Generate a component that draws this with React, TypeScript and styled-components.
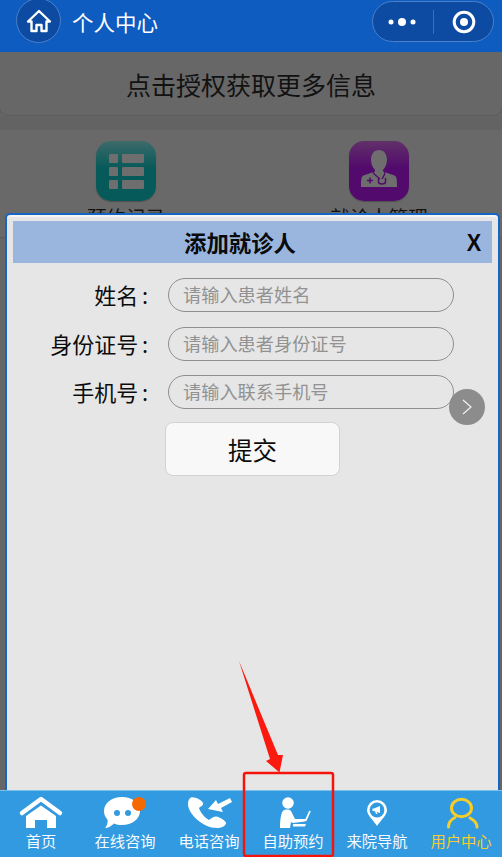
import React from "react";
import styled, { createGlobalStyle } from "styled-components";

const Global = createGlobalStyle`
  html, body { margin: 0; padding: 0; background: #666; }
  * { box-sizing: border-box; }
  body { font-family: "Noto Sans CJK SC", "Liberation Sans", sans-serif; }
`;

const Screen = styled.div`
  position: relative;
  width: 502px;
  height: 857px;
  overflow: hidden;
  display: flex;
  flex-direction: column;
`;

const NavBar = styled.header`
  height: 52px;
  flex: none;
  background: #0e5cc0;
  display: flex;
  align-items: flex-start;
  padding: 0 8px 0 16px;
`;

const HomeButton = styled.div`
  width: 45px;
  height: 45px;
  margin-top: -2px;
  border-radius: 50%;
  background: #0d4ba3;
  border: 1px solid #4a80c8;
  display: flex;
  align-items: center;
  justify-content: center;
`;

const NavTitle = styled.div`
  margin-left: 11px;
  flex: 1;
  font-size: 21.5px;
  line-height: 43px;
  color: #fff;
`;

const Capsule = styled.div`
  width: 122px;
  height: 41px;
  margin-top: 1px;
  border-radius: 21px;
  background: #0d4ba3;
  border: 1px solid #4a80c8;
  display: flex;
  align-items: center;
`;

const CapsuleCell = styled.div<{ $nudge?: number }>`
  flex: 1;
  height: 100%;
  padding-left: ${(p) => p.$nudge ?? 0}px;
  display: flex;
  align-items: center;
  justify-content: center;
`;

const CapsuleDivider = styled.div`
  width: 1px;
  height: 24px;
  margin-left: 2px;
  background: #3a70b8;
`;

const Main = styled.main`
  position: relative;
  flex: 1;
  min-height: 0;
  overflow: hidden;
  background: #666;
`;

const AuthCard = styled.div`
  height: 64px;
  background: #676767;
  border: 1px solid #5c5c5c;
  border-top: 0;
  border-radius: 0 0 9px 9px;
  margin: 0 -1px;
  display: flex;
  align-items: center;
  justify-content: center;
  font-size: 25px;
  color: #121212;
`;

const Gap = styled.div`
  height: 14px;
  background: #636363;
`;

const Shortcuts = styled.section`
  height: 108px;
  background: #696969;
  border-bottom: 1px solid #5c5c5c;
  display: grid;
  grid-template-columns: 252px 254px;
  padding-top: 11px;
`;

const Shortcut = styled.div`
  display: flex;
  flex-direction: column;
  align-items: center;
  font-size: 19.5px;
  line-height: 28px;
  color: #111;
`;

const ShortcutIcon = styled.div<{ $top: string; $bottom: string }>`
  width: 60px;
  height: 60px;
  margin-bottom: 2px;
  border-radius: 15px;
  background: linear-gradient(180deg, ${(p) => p.$top}, ${(p) => p.$bottom} 45%);
  box-shadow: 0 1px 1px rgba(0, 0, 0, 0.25);
  display: flex;
  align-items: center;
  justify-content: center;
`;

const Modal = styled.div`
  position: absolute;
  top: 161px;
  left: 5px;
  width: 495px;
  bottom: -10px;
  background: #e6e6e6;
  border: 2px solid #1566c4;
  border-radius: 5px;
  padding: 6px 6px 0 6px;
  box-shadow: inset 0 2px 0 #f5f5f5;
`;

const ModalHead = styled.div`
  position: relative;
  height: 42px;
  background: #9ab6df;
  display: flex;
  align-items: center;
  justify-content: center;
  padding-right: 25px;
  font-size: 22.4px;
  font-weight: 700;
  color: #0a0a0a;
`;

const CloseMark = styled.span`
  position: absolute;
  right: 10px;
  top: 8px;
  font-family: "Liberation Sans", sans-serif;
  font-size: 24px;
  line-height: 28px;
  font-weight: 700;
  transform: scaleX(0.9);
`;

const Form = styled.form`
  display: flex;
  flex-direction: column;
  gap: 14.5px;
  padding-top: 15px;
`;

const Row = styled.div`
  display: flex;
  align-items: center;
  height: 34px;
`;

const Label = styled.label`
  width: 135px;
  text-align: right;
  font-size: 22px;
  line-height: 32px;
  margin-bottom: 2px;
  color: #0c0c0c;
  white-space: nowrap;
`;

const Colon = styled.span`
  display: inline-block;
  padding-left: 3.5px;
`;

const Field = styled.input`
  margin-left: 20px;
  width: 286px;
  height: 34px;
  padding: 0 14px 2px;
  border: 1.5px solid #8e8e8e;
  border-radius: 17px;
  background: transparent;
  outline: none;
  font-family: inherit;
  font-size: 18.2px;
  color: #333;
  &::placeholder { color: #929292; opacity: 1; }
`;

const Submit = styled.button`
  align-self: flex-start;
  margin: -1.5px 0 0 152px;
  width: 175px;
  height: 54px;
  border: 1px solid #d2d2d2;
  border-radius: 8px;
  background: #f8f8f8;
  font-family: inherit;
  font-size: 24.5px;
  color: #0c0c0c;
  padding: 0;
`;

const Floater = styled.div`
  position: absolute;
  left: 449px;
  top: 337px;
  width: 36px;
  height: 36px;
  border-radius: 50%;
  background: #8c8c8c;
  display: flex;
  align-items: center;
  justify-content: center;
`;

const TabBar = styled.nav`
  height: 67px;
  flex: none;
  background: #329ae0;
  border-top: 1px solid #7cc0ee;
  display: flex;
  justify-content: center;
`;

const Tab = styled.div<{ $active?: boolean }>`
  width: 84px;
  flex: none;
  display: flex;
  flex-direction: column;
  align-items: center;
  padding-top: 5px;
  font-size: 15.3px;
  line-height: 20px;
  white-space: nowrap;
  color: ${(p) => (p.$active ? "#f6cd2a" : "#f6fafe")};
  svg { display: block; margin-bottom: 1px; }
`;

const Annotation = styled.svg`
  position: absolute;
  left: 0;
  top: 0;
  pointer-events: none;
`;

const BLUE = "#329ae0";

const icons = {
  home: (
    <>
      <path d="M5 17 24 3 43 17" fill="none" stroke="#fff" strokeWidth="4.5" strokeLinecap="round" strokeLinejoin="round" />
      <path d="M24 9.500 39 20V32H30V24H18V32H9V20Z" fill="#fff" />
    </>
  ),
  chat: (
    <>
      <path d="M21 1C31 1 39 7 39 15S31 29 21 29C18 29 15.500 28.500 13 27.500 10.500 30 7 32 4 32 6 30 7 27 6.500 23.500 4 21 3 18 3 15 3 7 11 1 21 1Z" fill="#fff" />
      <circle cx="16" cy="17" r="3" fill={BLUE} />
      <circle cx="27" cy="17" r="3" fill={BLUE} />
      <circle cx="38" cy="8" r="7" fill="#f56a00" />
    </>
  ),
  phone: (
    <>
      <path d="M6 1.500C9 .5 17 4 18 7 19 9 15 11 14 12 15 16 20 22 24 24 26 23 28 20 31 20.500 35 21 41 25 41 27 41 30 36 32 32 32 18 32 3 18 3 8 3 5 4 2.500 6 1.500Z" fill="#fff" />
      <path d="M23 13 31 4 33 8 45 2 47 6 36 12 38 16Z" fill="#fff" />
    </>
  ),
  desk: (
    <>
      <circle cx="19" cy="7" r="5.800" fill="#fff" />
      <path d="M11 32C11 24 12 18 13.500 15.500 15 13 20 13 22 15L26 23H37L36 25.500 24 27 22 26 21 32Z" fill="#fff" />
      <path d="M41 15 36.500 25" fill="none" stroke="#fff" strokeWidth="1.800" />
      <path d="M24 28H37L36 30.500H24Z" fill="#fff" />
    </>
  ),
  pin: (
    <>
      <path d="M24 30C20 24 14 19 14 14A10 10 0 0 1 34 14C34 19 28 24 24 30Z" fill="#fff" />
      <circle cx="24" cy="14" r="7.400" fill={BLUE} />
      <path d="M19.500 12.500H21L27 10V17L21 15H19.500ZM22 15.500 23 18H24.500L23.500 15.500Z" fill="#fff" />
    </>
  ),
  user: (
    <>
      <ellipse cx="24.500" cy="12" rx="10" ry="8.800" fill="none" stroke="#f6cd2a" strokeWidth="3" />
      <path d="M11.500 31C11.500 27 14 23.500 18 21.500M40 31C40 27 37 24 33 22" fill="none" stroke="#f6cd2a" strokeWidth="3" strokeLinecap="round" />
    </>
  ),
};

const tabs: { key: keyof typeof icons; label: string; active?: boolean }[] = [
  { key: "home", label: "首页" },
  { key: "chat", label: "在线咨询" },
  { key: "phone", label: "电话咨询" },
  { key: "desk", label: "自助预约" },
  { key: "pin", label: "来院导航" },
  { key: "user", label: "用户中心", active: true },
];

const fields = [
  { label: "姓名", hint: "请输入患者姓名" },
  { label: "身份证号", hint: "请输入患者身份证号" },
  { label: "手机号", hint: "请输入联系手机号" },
];

export default function App() {
  return (
    <Screen>
      <Global />
      <NavBar>
        <HomeButton>
          <svg width="26" height="24" viewBox="0 0 26 24" fill="none" stroke="#fff" strokeWidth="2.400" strokeLinejoin="round">
            <path d="M2 12.500 13 2 24 12.500H20.500V22H15.500V16H10.500V22H5.500V12.500Z" />
          </svg>
        </HomeButton>
        <NavTitle>个人中心</NavTitle>
        <Capsule>
          <CapsuleCell>
            <svg width="44" height="10" viewBox="0 0 44 10" fill="#fff">
              <circle cx="11" cy="5" r="2.500" />
              <circle cx="22" cy="5" r="4" />
              <circle cx="33" cy="5" r="2.500" />
            </svg>
          </CapsuleCell>
          <CapsuleDivider />
          <CapsuleCell $nudge={2}>
            <svg width="24" height="24" viewBox="0 0 24 24">
              <circle cx="12" cy="12" r="9.800" fill="none" stroke="#fff" strokeWidth="3" />
              <circle cx="12" cy="12" r="4" fill="#fff" />
            </svg>
          </CapsuleCell>
        </Capsule>
      </NavBar>

      <Main>
        <AuthCard>点击授权获取更多信息</AuthCard>
        <Gap />
        <Shortcuts>
          <Shortcut>
            <ShortcutIcon $top="#3d6a6a" $bottom="#075a5a">
              <svg width="35" height="35" viewBox="0 0 35 35" fill="#6e6e6e">
                <rect x="0" y="0" width="9" height="9" rx="1" />
                <rect x="13" y="0" width="22" height="9" rx="1" />
                <rect x="0" y="13" width="9" height="9" rx="1" />
                <rect x="13" y="13" width="22" height="9" rx="1" />
                <rect x="0" y="26" width="9" height="9" rx="1" />
                <rect x="13" y="26" width="22" height="9" rx="1" />
              </svg>
            </ShortcutIcon>
            预约记录
          </Shortcut>
          <Shortcut>
            <ShortcutIcon $top="#613068" $bottom="#520a6c">
              <svg width="36" height="42" viewBox="0 0 36 42">
                <path d="M18 0C23 0 26 4 26 10 26 14 24.500 17 22 20V21.500L33.500 25.500C35.500 26.500 36 28 36 37H0C0 28 .5 26.500 2.500 25.500L14 21.500V20C11.500 17 10 14 10 10 10 4 13 0 18 0Z" fill="#6e6e6e" />
                <path d="M12 22C13 25 17 27 19 29M24 22C24 25 22 27 21 29" fill="none" stroke="#520a6c" strokeWidth="1.200" />
                <path d="M17.500 28V32C17.500 34.500 24.500 34.500 24.500 32V28" fill="none" stroke="#520a6c" strokeWidth="1.500" />
                <path d="M6 30.500H12M9 27.500V33.500" stroke="#520a6c" strokeWidth="1.500" />
              </svg>
            </ShortcutIcon>
            就诊人管理
          </Shortcut>
        </Shortcuts>

        <Modal>
          <ModalHead>
            添加就诊人
            <CloseMark>X</CloseMark>
          </ModalHead>
          <Form>
            {fields.map((f) => (
              <Row key={f.label}>
                <Label>
                  {f.label}
                  <Colon>:</Colon>
                </Label>
                <Field placeholder={f.hint} />
              </Row>
            ))}
            <Submit type="button">提交</Submit>
          </Form>
        </Modal>

        <Floater>
          <svg width="12" height="18" viewBox="0 0 12 18" fill="none" stroke="#f0f0f0" strokeWidth="1.200">
            <path d="M2 2 10 9 2 16" />
          </svg>
        </Floater>
      </Main>

      <TabBar>
        {tabs.map((t) => (
          <Tab key={t.key} $active={t.active}>
            <svg width="48" height="33" viewBox="0 0 48 33">
              {icons[t.key]}
            </svg>
            {t.label}
          </Tab>
        ))}
      </TabBar>

      <Annotation width="502" height="857" viewBox="0 0 502 857">
        <path d="M239 661 278 755 283 755 279.500 772.500 266 761 270 759Z" fill="#fb1a10" />
        <rect x="244" y="773" width="89" height="83" rx="2" fill="none" stroke="#f5140c" strokeWidth="2.500" />
      </Annotation>
    </Screen>
  );
}
